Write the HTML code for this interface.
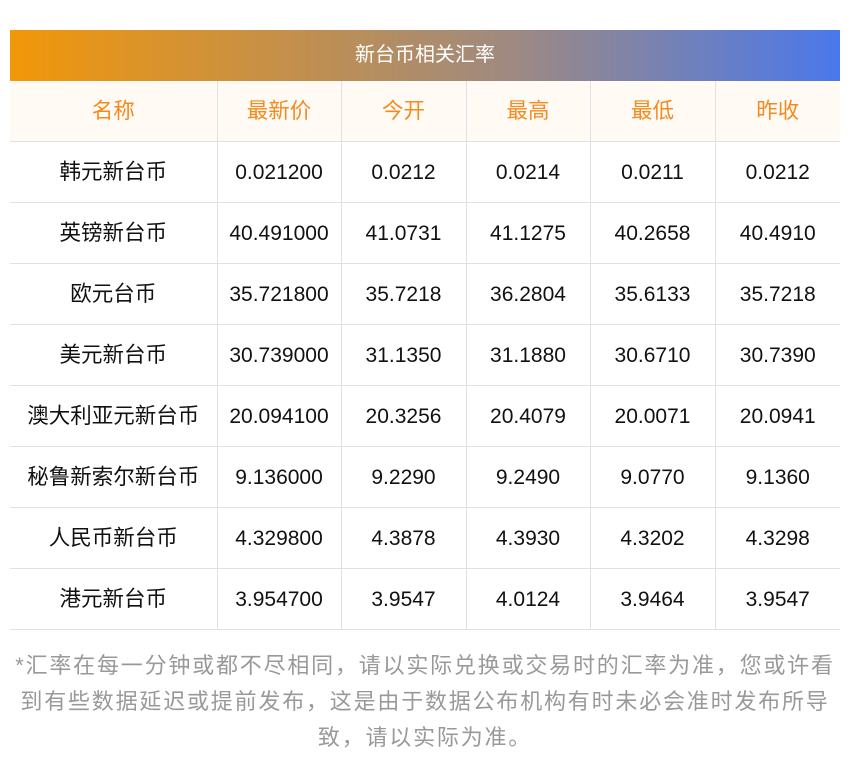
<!DOCTYPE html>
<html><head><meta charset="utf-8"><style>
body{margin:0;background:#fff;width:850px;height:769px;overflow:hidden;font-family:"Liberation Sans","Noto Sans CJK SC",sans-serif;}
.t{position:absolute;left:10px;top:30px;width:830px;}
.bar{height:51px;background:linear-gradient(90deg,#f29708,#9f8a80 60%,#4a78ec);color:#fff;font-size:20px;text-align:center;line-height:51px;}
table{border-collapse:collapse;width:830px;table-layout:fixed;}
td{height:60px;border-bottom:1px solid #dfe0e8;border-left:1px solid #dfe0e8;text-align:center;font-size:21px;line-height:21px;color:#111;padding:0;vertical-align:middle;}
td:first-child{border-left:none;font-size:21.5px;}
tr.h td{background:#fffaf3;color:#f58a1e;font-size:21.5px;}
.n{position:absolute;left:0;top:648px;width:850px;text-align:center;color:#999;font-size:22px;letter-spacing:1.8px;line-height:36px;white-space:nowrap;}
</style></head><body>
<div class="t">
<div class="bar">新台币相关汇率</div>
<table>
<colgroup><col style="width:207px"><col style="width:124px"><col style="width:125px"><col style="width:124px"><col style="width:125px"><col style="width:125px"></colgroup>
<tr class="h"><td>名称</td><td>最新价</td><td>今开</td><td>最高</td><td>最低</td><td>昨收</td></tr>
<tr><td>韩元新台币</td><td>0.021200</td><td>0.0212</td><td>0.0214</td><td>0.0211</td><td>0.0212</td></tr>
<tr><td>英镑新台币</td><td>40.491000</td><td>41.0731</td><td>41.1275</td><td>40.2658</td><td>40.4910</td></tr>
<tr><td>欧元台币</td><td>35.721800</td><td>35.7218</td><td>36.2804</td><td>35.6133</td><td>35.7218</td></tr>
<tr><td>美元新台币</td><td>30.739000</td><td>31.1350</td><td>31.1880</td><td>30.6710</td><td>30.7390</td></tr>
<tr><td>澳大利亚元新台币</td><td>20.094100</td><td>20.3256</td><td>20.4079</td><td>20.0071</td><td>20.0941</td></tr>
<tr><td>秘鲁新索尔新台币</td><td>9.136000</td><td>9.2290</td><td>9.2490</td><td>9.0770</td><td>9.1360</td></tr>
<tr><td>人民币新台币</td><td>4.329800</td><td>4.3878</td><td>4.3930</td><td>4.3202</td><td>4.3298</td></tr>
<tr><td>港元新台币</td><td>3.954700</td><td>3.9547</td><td>4.0124</td><td>3.9464</td><td>3.9547</td></tr>
</table>
</div>
<div class="n">*汇率在每一分钟或都不尽相同，请以实际兑换或交易时的汇率为准，您或许看<br>到有些数据延迟或提前发布，这是由于数据公布机构有时未必会准时发布所导<br>致，请以实际为准。</div>
</body></html>
